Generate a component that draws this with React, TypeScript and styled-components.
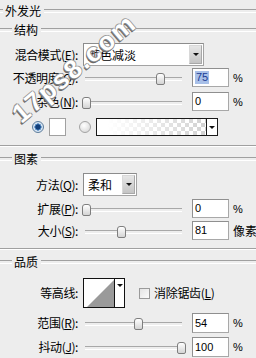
import React from 'react';
import styled, { createGlobalStyle, css } from 'styled-components';

const GlobalStyle = createGlobalStyle`
  html, body { margin: 0; padding: 0; background: #ededed; }
  body {
    font-family: "Noto Sans CJK SC", "Noto Sans", sans-serif;
    font-size: 12px;
    color: #000;
  }
  * { box-sizing: border-box; }
`;

const Panel = styled.div`
  position: relative;
  width: 256px;
  height: 358px;
  overflow: hidden;
  background: #ededed;
  display: flex;
  flex-direction: column;
`;

const Heading = styled.div<{ $indent: number; $h: number; $mt?: number }>`
  display: flex;
  align-items: center;
  flex: none;
  height: ${p => p.$h}px;
  margin-top: ${p => p.$mt ?? 0}px;
  line-height: 14px;
  white-space: nowrap;
  &::before,
  &::after {
    content: '';
    height: 2px;
    border-top: 1px solid #a0a0a0;
    border-bottom: 1px solid #ffffff;
  }
  &::before {
    width: ${p => p.$indent}px;
    margin-right: 2px;
  }
  &::after {
    flex: 1;
    margin-left: 3px;
  }
`;

const Group = styled.section<{ $pb: number; $last?: boolean }>`
  display: flex;
  flex-direction: column;
  flex: none;
  padding-bottom: ${p => p.$pb}px;
  ${p =>
    !p.$last &&
    css`
      border-bottom: 1px solid #a0a0a0;
      box-shadow: 0 1px 0 #ffffff;
    `}
`;

const Row = styled.div<{ $h: number; $mt: number }>`
  display: flex;
  align-items: center;
  flex: none;
  height: ${p => p.$h}px;
  margin-top: ${p => p.$mt}px;
  white-space: nowrap;
`;

const LabelBox = styled.div<{ $pr?: number }>`
  flex: none;
  width: 80px;
  padding-right: ${p => p.$pr ?? 2}px;
  text-align: right;
  line-height: 14px;
  letter-spacing: -0.4px;
`;

const Ul = styled.span`
  text-decoration: underline;
  text-underline-offset: 1px;
`;

const Label: React.FC<{ text: string; k?: string; pr?: number }> = ({ text, k, pr }) => (
  <LabelBox $pr={pr}>
    {text}
    {k ? (
      <>
        (<Ul>{k}</Ul>):
      </>
    ) : (
      ':'
    )}
  </LabelBox>
);

const SelectBox = styled.div<{ $w: number }>`
  display: flex;
  align-items: stretch;
  width: ${p => p.$w}px;
  height: 23px;
  margin-left: 3px;
  background: #ffffff;
  border: 1px solid #a3a3a3;
  border-top-color: #8c8c8c;
  border-left-color: #8c8c8c;
`;

const SelectText = styled.div`
  flex: 1;
  display: flex;
  align-items: center;
  padding-left: 4px;
  line-height: 14px;
`;

const DropBtn = styled.div`
  width: 13px;
  margin: 1px;
  display: flex;
  align-items: center;
  justify-content: center;
  background: linear-gradient(#e6e6e6, #c4c4c4);
  border: 1px solid #d8d8d8;
  border-right-color: #a8a8a8;
  border-bottom-color: #a8a8a8;
`;

const Caret = styled.span<{ $size?: number }>`
  width: 0;
  height: 0;
  border-left: ${p => p.$size ?? 3.5}px solid transparent;
  border-right: ${p => p.$size ?? 3.5}px solid transparent;
  border-top: ${p => p.$size ?? 3.5}px solid #111;
`;

const Select: React.FC<{ w: number; value: string }> = ({ w, value }) => (
  <SelectBox $w={w}>
    <SelectText>{value}</SelectText>
    <DropBtn>
      <Caret />
    </DropBtn>
  </SelectBox>
);

const Track = styled.div`
  position: relative;
  flex: none;
  align-self: stretch;
  width: 97px;
  margin-left: 5px;
  &::before {
    content: '';
    position: absolute;
    left: 0;
    right: 0;
    top: calc(50% - 1px);
    height: 2px;
    border-top: 1px solid #a8a8a8;
    border-bottom: 1px solid #ffffff;
  }
`;

const Thumb = styled.div`
  position: absolute;
  top: calc(50% - 5px);
  width: 9px;
  height: 12px;
  margin-left: -4px;
  border: 1px solid #7e7e7e;
  border-radius: 3px 3px 2px 2px;
  background: linear-gradient(#ffffff, #d4d4d4);
`;

const NumBox = styled.div`
  flex: none;
  display: flex;
  align-items: center;
  align-self: stretch;
  width: 37px;
  margin-left: 10px;
  padding-left: 2px;
  background: #ffffff;
  border: 1px solid #a8a8a8;
  border-top-color: #8f8f8f;
  border-left-color: #8f8f8f;
  font-family: "Liberation Sans", Arial, sans-serif;
  font-size: 11px;
  line-height: 13px;
`;

const Selected = styled.span`
  background: #a8c0e8;
  color: #1c3c94;
  padding: 0 1px;
`;

const Unit = styled.span`
  margin-left: 4px;
  font-family: "Liberation Sans", "Noto Sans CJK SC", sans-serif;
  font-size: 11px;
  line-height: 14px;
`;

const UnitCjk = styled.span`
  margin-left: 4px;
  line-height: 14px;
`;

const Slider: React.FC<{
  label: string;
  k: string;
  pos: number;
  value: string;
  unit: string;
  highlight?: boolean;
  h: number;
  mt: number;
}> = ({ label, k, pos, value, unit, highlight, h, mt }) => (
  <Row $h={h} $mt={mt}>
    <Label text={label} k={k} />
    <Track>
      <Thumb style={{ left: pos }} />
    </Track>
    <NumBox>{highlight ? <Selected>{value}</Selected> : value}</NumBox>
    {unit === '%' ? <Unit>{unit}</Unit> : <UnitCjk>{unit}</UnitCjk>}
  </Row>
);

const Radio = styled.span<{ $on?: boolean; $ml: number }>`
  flex: none;
  width: 12px;
  height: 12px;
  margin-left: ${p => p.$ml}px;
  border-radius: 50%;
  border: 1px solid ${p => (p.$on ? '#5d7d9c' : '#a4a4a4')};
  background: ${p =>
    p.$on
      ? 'radial-gradient(circle, #123f7a 0 2.4px, #4f86c0 2.8px 3.4px, #d6e4f2 3.8px)'
      : 'radial-gradient(circle at 40% 35%, #ffffff, #d2d2d2)'};
`;

const ColorSwatch = styled.span`
  flex: none;
  width: 17px;
  height: 18px;
  margin-left: 5px;
  background: #ffffff;
  border: 1px solid #a0a0a0;
`;

const GradientBox = styled.div`
  flex: none;
  display: flex;
  width: 122px;
  height: 18px;
  margin-left: 5px;
  border: 1px solid #1a1a1a;
  background-color: #ffffff;
`;

const GradientFill = styled.div`
  flex: 1;
  background-image: linear-gradient(to right, #ffffff 10%, rgba(255, 255, 255, 0)),
    conic-gradient(#d2d2d2 25%, #ffffff 0 50%, #d2d2d2 0 75%, #ffffff 0);
  background-size: 100% 100%, 8px 8px;
`;

const GradientArrow = styled.div`
  width: 11px;
  display: flex;
  align-items: center;
  justify-content: center;
  border-left: 1px solid #1a1a1a;
  background: #ffffff;
`;

const ContourBox = styled.div`
  flex: none;
  display: flex;
  width: 42px;
  height: 30px;
  margin-left: 3px;
  border: 1px solid #111111;
  background: #ffffff;
`;

const ContourArt = styled.svg`
  display: block;
  width: 30px;
  height: 28px;
`;

const ContourArrow = styled.div`
  flex: 1;
  display: flex;
  justify-content: center;
  padding-top: 5px;
  border-left: 1px solid #111111;
`;

const CheckBox = styled.span`
  flex: none;
  width: 11px;
  height: 11px;
  margin-left: 14px;
  border: 1px solid #9a9a9a;
  background: linear-gradient(135deg, #e4e4e4, #fbfbfb);
`;

const CheckLabel = styled.span`
  margin-left: 4px;
  line-height: 14px;
  letter-spacing: -0.3px;
`;

const Watermark = styled.div`
  position: absolute;
  left: 74px;
  top: 68px;
  transform: translate(-50%, -50%) rotate(-40deg);
  font-family: "Liberation Sans", Arial, sans-serif;
  font-weight: bold;
  font-size: 26px;
  letter-spacing: 2px;
  line-height: 30px;
  color: #ffffff;
  white-space: nowrap;
  pointer-events: none;
  text-shadow: -1px 0 0 #8a8a8a, 0 1px 0 #8a8a8a, 1px 0 0 #9a9a9a, 0 -1px 0 #9a9a9a,
    -2px 1px 0 #6a6a6a;
`;

export default function App() {
  return (
    <>
      <GlobalStyle />
      <Panel>
        <Heading $indent={3} $h={22}>
          外发光
        </Heading>

        <Group $pb={9}>
          <Heading $indent={12} $h={16}>
            结构
          </Heading>
          <Row $h={23} $mt={5}>
            <Label text="混合模式" k="E" />
            <Select w={121} value="颜色减淡" />
          </Row>
          <Slider label="不透明度" k="O" pos={75} value="75" unit="%" highlight h={19} mt={2} />
          <Slider label="杂色" k="N" pos={1} value="0" unit="%" h={19} mt={5} />
          <Row $h={18} $mt={7}>
            <Radio $on $ml={32} />
            <ColorSwatch />
            <Radio $ml={13} />
            <GradientBox>
              <GradientFill />
              <GradientArrow>
                <Caret $size={3} />
              </GradientArrow>
            </GradientBox>
          </Row>
        </Group>

        <Group $pb={8}>
          <Heading $indent={12} $h={16} $mt={5}>
            图素
          </Heading>
          <Row $h={23} $mt={6}>
            <Label text="方法" k="Q" />
            <Select w={54} value="柔和" />
          </Row>
          <Slider label="扩展" k="P" pos={1} value="0" unit="%" h={19} mt={3} />
          <Slider label="大小" k="S" pos={36} value="81" unit="像素" h={19} mt={3} />
        </Group>

        <Group $pb={0} $last>
          <Heading $indent={12} $h={16} $mt={5}>
            品质
          </Heading>
          <Row $h={30} $mt={8}>
            <Label text="等高线" />
            <ContourBox>
              <ContourArt viewBox="0 0 30 28">
                <polygon points="3,28 30,1 30,28" fill="#9a9a9a" />
              </ContourArt>
              <ContourArrow>
                <Caret $size={3} />
              </ContourArrow>
            </ContourBox>
            <CheckBox />
            <CheckLabel>
              消除锯齿(<Ul>L</Ul>)
            </CheckLabel>
          </Row>
          <Slider label="范围" k="R" pos={53} value="54" unit="%" h={20} mt={5} />
          <Slider label="抖动" k="J" pos={96} value="100" unit="%" h={20} mt={4} />
        </Group>

        <Watermark>17ps8.com</Watermark>
      </Panel>
    </>
  );
}
